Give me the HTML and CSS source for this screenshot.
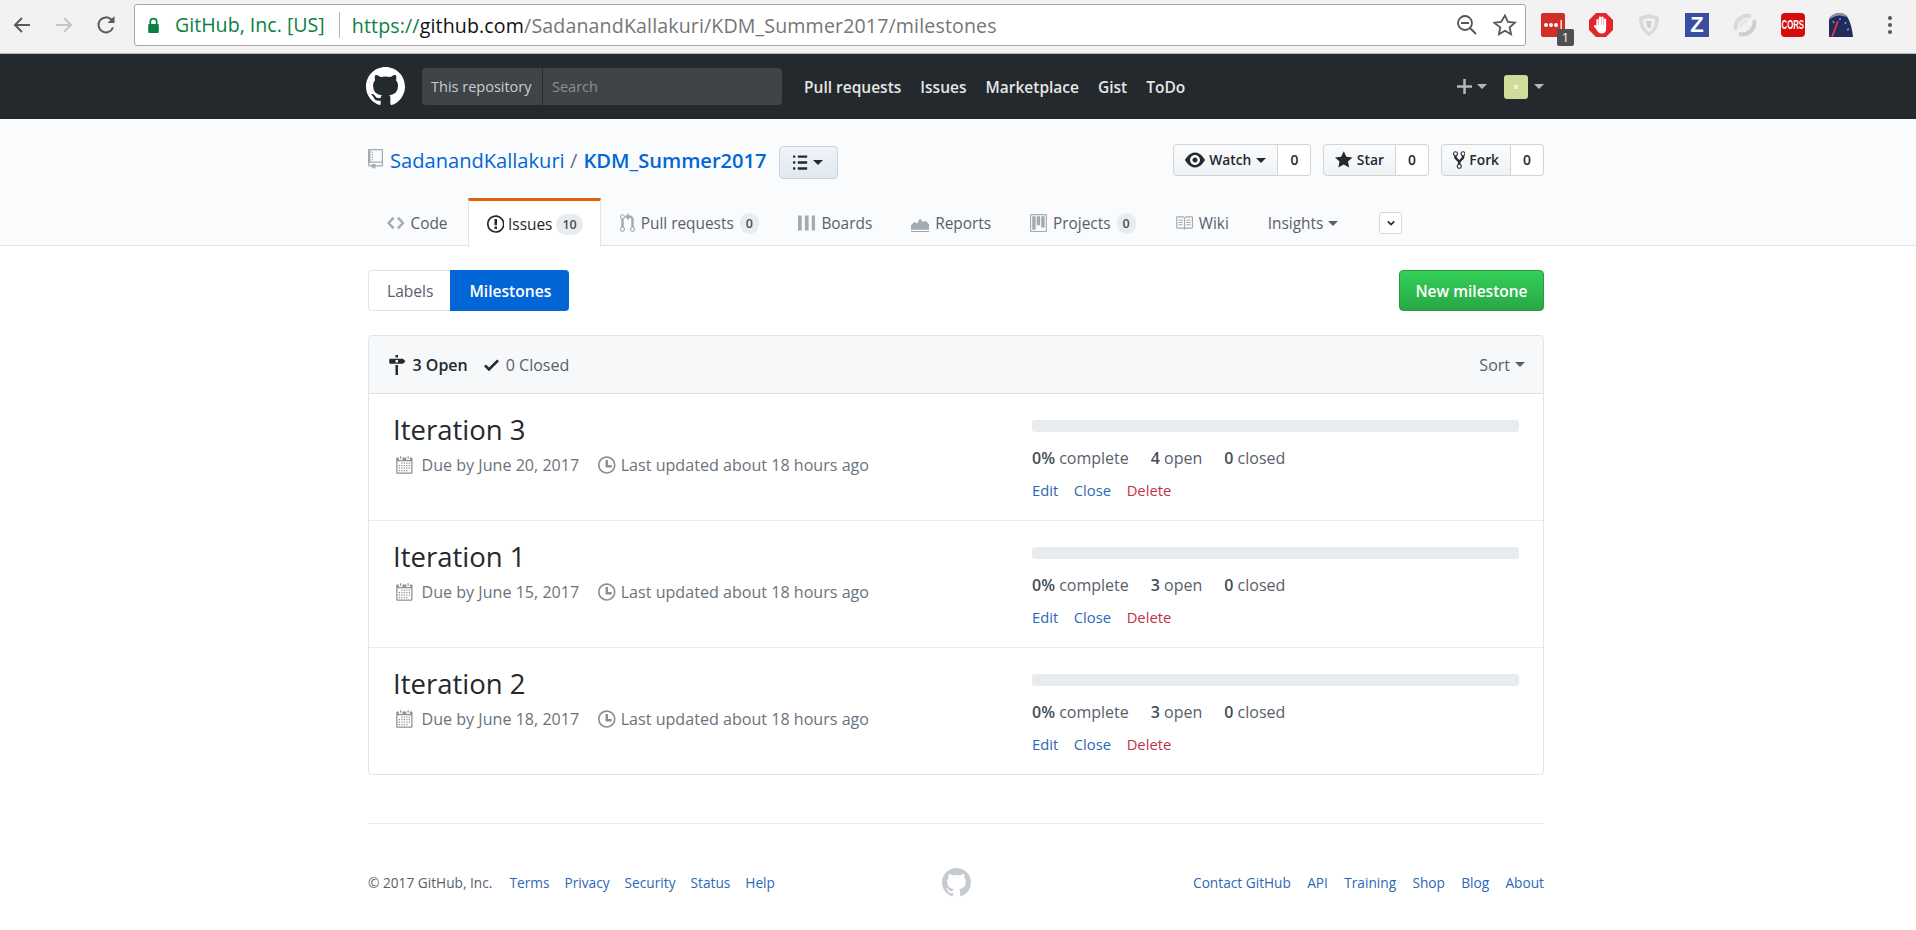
FILE: index.html
```html
<!DOCTYPE html>
<html lang="en">
<head>
  <meta charset="UTF-8">
  <title>Milestones - SadanandKallakuri/KDM_Summer2017</title>
  <link rel="stylesheet" href="styles.css">
</head>
<body>
  <!-- shared icon shapes -->
  <svg class="defs" width="0" height="0">
    <defs>
      <path id="i-mark" d="M8 0C3.58 0 0 3.58 0 8c0 3.54 2.29 6.53 5.47 7.59.4.07.55-.17.55-.38 0-.19-.01-.82-.01-1.49-2.01.37-2.53-.49-2.69-.94-.09-.23-.48-.94-.82-1.13-.28-.15-.68-.52-.01-.53.63-.01 1.08.58 1.23.82.72 1.21 1.87.87 2.33.66.07-.52.28-.87.51-1.07-1.78-.2-3.64-.89-3.64-3.95 0-.87.31-1.59.82-2.15-.08-.2-.36-1.02.08-2.12 0 0 .67-.21 2.2.82.64-.18 1.32-.27 2-.27.68 0 1.36.09 2 .27 1.53-1.04 2.2-.82 2.2-.82.44 1.1.16 1.92.08 2.12.51.56.82 1.27.82 2.15 0 3.07-1.87 3.75-3.65 3.95.29.25.54.73.54 1.48 0 1.07-.01 1.93-.01 2.2 0 .21.15.46.55.38A8.013 8.013 0 0 0 16 8c0-4.42-3.58-8-8-8z"/>
      <path id="i-repo" d="M4 9H3V8h1v1zm0-3H3v1h1V6zm0-2H3v1h1V4zm0-2H3v1h1V2zm8-1v12c0 .55-.45 1-1 1H6v2l-1.5-1.5L3 16v-2H1c-.55 0-1-.45-1-1V1c0-.55.45-1 1-1h10c.55 0 1 .45 1 1zm-1 10H1v2h2v-1h3v1h5v-2zm0-10H2v9h9V1z"/>
      <path id="i-code" d="M9.5 3L8 4.5 11.5 8 8 11.5 9.5 13 14 8 9.5 3zm-5 0L0 8l4.5 5L6 11.5 2.5 8 6 4.5 4.5 3z"/>
      <path id="i-issue" d="M7 2.3c3.14 0 5.7 2.56 5.7 5.7s-2.56 5.7-5.7 5.7A5.71 5.71 0 0 1 1.3 8c0-3.14 2.56-5.7 5.7-5.7zM7 1C3.14 1 0 4.14 0 8s3.14 7 7 7 7-3.14 7-7-3.14-7-7-7zm1 3H6v5h2V4zm0 6H6v2h2v-2z"/>
      <path id="i-pull" d="M11 11.28V5c-.03-.78-.34-1.47-.94-2.06C9.46 2.35 8.78 2.03 8 2H7V0L4 3l3 3V4h1c.27.02.48.11.69.31.21.2.3.42.31.69v6.28A1.993 1.993 0 0 0 10 15a1.993 1.993 0 0 0 1-3.72zm-1 2.92c-.66 0-1.2-.55-1.2-1.2 0-.65.55-1.2 1.2-1.2.65 0 1.2.55 1.2 1.2 0 .65-.55 1.2-1.2 1.2zM4 3c0-1.11-.89-2-2-2a1.993 1.993 0 0 0-1 3.72v6.56A1.993 1.993 0 0 0 2 15a1.993 1.993 0 0 0 1-3.72V4.72c.59-.34 1-.98 1-1.72zm-.8 10c0 .66-.55 1.2-1.2 1.2-.65 0-1.2-.55-1.2-1.2 0-.65.55-1.2 1.2-1.2.65 0 1.2.55 1.2 1.2zM2 4.2C1.34 4.2.8 3.65.8 3c0-.65.55-1.2 1.2-1.2.65 0 1.2.55 1.2 1.2 0 .65-.55 1.2-1.2 1.2z"/>
      <path id="i-boards" d="M0 2h3v12H0zM5.500 2h3v12h-3zM11 2h3v12h-3z"/>
      <path id="i-reports" d="M0 14V10l3-3 2.500 1.500L8 4l2.500 3 2.500-1 3 3v5zM0 15h16v1H0z"/>
      <path id="i-project" d="M10 12h3V2h-3v10zm-4-2h3V2H6v8zm-4 4h3V2H2v12zm-1 1h13V1H1v14zM14 0H1a1 1 0 0 0-1 1v14a1 1 0 0 0 1 1h13a1 1 0 0 0 1-1V1a1 1 0 0 0-1-1z"/>
      <path id="i-book" d="M3 5h4v1H3V5zm0 3h4V7H3v1zm0 2h4V9H3v1zm11-5h-4v1h4V5zm0 2h-4v1h4V7zm0 2h-4v1h4V9zm2-6v9c0 .55-.45 1-1 1H9.500l-1 1-1-1H2c-.55 0-1-.45-1-1V3c0-.55.45-1 1-1h5.500l1 1 1-1H15c.55 0 1 .45 1 1zm-8 .5L7.500 3H2v9h6V3.500zm7-.5H9.500l-.5.5V12h6V3z"/>
      <path id="i-eye" d="M8.060 2C3 2 0 8 0 8s3 6 8.060 6C13 14 16 8 16 8s-3-6-7.940-6zM8 12c-2.200 0-4-1.780-4-4 0-2.200 1.800-4 4-4 2.220 0 4 1.800 4 4 0 2.220-1.780 4-4 4zm2-4c0 1.110-.89 2-2 2-1.110 0-2-.89-2-2 0-1.110.89-2 2-2 1.110 0 2 .89 2 2z"/>
      <path id="i-star" d="M14 6l-4.900-.64L7 1 4.900 5.360 0 6l3.600 3.260L2.670 14 7 11.670 11.330 14l-.93-4.740L14 6z"/>
      <path id="i-fork" d="M8 1a1.993 1.993 0 0 0-1 3.720V6L5 8 3 6V4.720A1.993 1.993 0 0 0 2 1a1.993 1.993 0 0 0-1 3.720V6.500l3 3v1.780A1.993 1.993 0 0 0 5 15a1.993 1.993 0 0 0 1-3.720V9.500l3-3V4.720A1.993 1.993 0 0 0 8 1zM2 4.200C1.340 4.200.8 3.650.8 3c0-.65.55-1.200 1.200-1.200.65 0 1.200.55 1.200 1.200 0 .65-.55 1.200-1.200 1.200zm3 10c-.66 0-1.200-.55-1.200-1.200 0-.65.55-1.200 1.200-1.200.65 0 1.200.55 1.200 1.200 0 .65-.55 1.200-1.200 1.200zm3-10c-.66 0-1.200-.55-1.200-1.200 0-.65.55-1.200 1.200-1.200.65 0 1.200.55 1.200 1.200 0 .65-.55 1.200-1.200 1.200z"/>
      <path id="i-milestone" d="M8 2H6V0h2v2zm4 5H2c-.55 0-1-.45-1-1V4c0-.55.45-1 1-1h10l2 2-2 2zM8 4H6v2h2V4zM6 16h2V8H6v8z"/>
      <path id="i-check" d="M12 5l-8 8-4-4 1.500-1.500L4 10l6.500-6.500L12 5z"/>
      <path id="i-calendar" d="M13 2h-1v1.500c0 .28-.22.5-.5.5h-2c-.28 0-.5-.22-.5-.5V2H6v1.500c0 .28-.22.5-.5.5h-2c-.28 0-.5-.22-.5-.5V2H2c-.55 0-1 .45-1 1v11c0 .55.45 1 1 1h11c.55 0 1-.45 1-1V3c0-.55-.45-1-1-1zm0 12H2V5h11v9zM5 3H4V1h1v2zm6 0h-1V1h1v2zM6 7H5V6h1v1zm2 0H7V6h1v1zm2 0H9V6h1v1zm2 0h-1V6h1v1zM4 9H3V8h1v1zm2 0H5V8h1v1zm2 0H7V8h1v1zm2 0H9V8h1v1zm2 0h-1V8h1v1zm-8 2H3v-1h1v1zm2 0H5v-1h1v1zm2 0H7v-1h1v1zm2 0H9v-1h1v1zm2 0h-1v-1h1v1zm-8 2H3v-1h1v1zm2 0H5v-1h1v1zm2 0H7v-1h1v1zm2 0H9v-1h1v1z"/>
      <path id="i-clock" d="M8 8h3v2H7c-.55 0-1-.45-1-1V4h2v4zM7 2.300c3.140 0 5.700 2.560 5.700 5.700s-2.560 5.700-5.700 5.700A5.710 5.710 0 0 1 1.300 8c0-3.140 2.560-5.700 5.700-5.700zM7 1C3.140 1 0 4.140 0 8s3.140 7 7 7 7-3.140 7-7-3.140-7-7-7z"/>
      <path id="i-list" d="M2 13c0 .59 0 1-.59 1H.59C0 14 0 13.590 0 13c0-.59 0-1 .59-1h.81c.59 0 .59.41.59 1H2zm2.590-9h6.810c.59 0 .59-.41.59-1 0-.59 0-1-.59-1H4.590C4 2 4 2.410 4 3c0 .59 0 1 .59 1zM1.410 7H.59C0 7 0 7.410 0 8c0 .59 0 1 .59 1h.81c.59 0 .59-.41.59-1 0-.59 0-1-.59-1h.01zm0-5H.59C0 2 0 2.410 0 3c0 .59 0 1 .59 1h.81c.59 0 .59-.41.59-1 0-.59 0-1-.59-1h.01zm10 5H4.590C4 7 4 7.410 4 8c0 .59 0 1 .59 1h6.810c.59 0 .59-.41.59-1 0-.59 0-1-.59-1h.01zm0 5H4.590C4 12 4 12.410 4 13c0 .59 0 1 .59 1h6.810c.59 0 .59-.41.59-1 0-.59 0-1-.59-1h.01z"/>
    </defs>
  </svg>

  <div class="toolbar">
    <div class="nav-btns">
      <svg class="tb-icon" viewBox="0 0 24 24"><path d="M20 12H5M12 5l-7 7 7 7" fill="none" stroke="#5a5a5a" stroke-width="2"/></svg>
      <svg class="tb-icon" viewBox="0 0 24 24"><path d="M4 12h15M12 5l7 7-7 7" fill="none" stroke="#c4c4c4" stroke-width="2"/></svg>
      <svg class="tb-icon" viewBox="0 0 24 24"><path d="M19 14.500A7.500 7.500 0 1 1 17.500 6.800" fill="none" stroke="#5a5a5a" stroke-width="2"/><path d="M20.500 3v7h-7z" fill="#5a5a5a"/></svg>
    </div>
    <div class="omnibox">
      <svg class="lock" viewBox="0 0 12 16"><path d="M3 7V4.500a3 3 0 0 1 6 0V7" fill="none" stroke="#0b8043" stroke-width="1.600"/><rect x="1" y="6.500" width="10" height="8.500" rx="1" fill="#0b8043"/></svg>
      <span class="ev-name">GitHub, Inc. [US]</span>
      <span class="url"><span class="url-scheme">https://</span><span class="url-host">github.com</span>/SadanandKallakuri/KDM_Summer2017/milestones</span>
      <svg class="zoom-icon" viewBox="0 0 22 22"><circle cx="9" cy="9" r="7" fill="none" stroke="#555" stroke-width="1.800"/><path d="M5 9h8M14 14l6 6" fill="none" stroke="#555" stroke-width="1.800"/></svg>
      <svg class="star-icon" viewBox="0 0 24 24"><path d="M12 2.500l2.900 6.400 7 .8-5.200 4.700 1.400 6.900-6.100-3.500-6.100 3.500 1.400-6.900L1.100 9.700l7-.8z" fill="none" stroke="#555" stroke-width="1.800"/></svg>
    </div>
    <div class="extensions">
      <div class="ext ext-lastpass">
        <svg viewBox="0 0 24 24"><circle cx="5" cy="12" r="2" fill="#fff"/><circle cx="10" cy="12" r="2" fill="#fff"/><circle cx="15" cy="12" r="2" fill="#fff"/><rect x="19.500" y="7" width="1.300" height="10" fill="#fff"/></svg>
        <span class="ext-badge">1</span>
      </div>
      <svg class="ext" viewBox="0 0 24 24">
        <path d="M7 0h10l7 7v10l-7 7H7l-7-7V7z" fill="#e3262e"/>
        <path d="M8.500 14V7M11 14V4.500M13.500 14V4.500M16 14V6.500" stroke="#fff" stroke-width="2.200" stroke-linecap="round"/>
        <path d="M7.500 12h9.600v4c0 3-2 4.500-4.300 4.500-2.500 0-3.500-1-4.500-2.800L5 13.500c-.6-1.200.9-2 1.800-1z" fill="#fff"/>
      </svg>
      <svg class="ext" viewBox="0 0 24 24"><path d="M12 1l10 3c0 9-3 15-10 19C5 19 2 13 2 4z" fill="#d9d9d9"/><path d="M12 5l6 1.500c0 5.500-2 10-6 12.500-4-2.500-6-7-6-12.500z" fill="#f2f2f2"/><path d="M9 8h6l-1.500 7h-3z" fill="#cfcfcf"/></svg>
      <div class="ext ext-z">Z</div>
      <svg class="ext" viewBox="0 0 24 24"><path d="M3 17C1 9 8 1 18 3" fill="none" stroke="#dadada" stroke-width="4"/><path d="M21 7c2 8-5 16-15 14" fill="none" stroke="#cfcfcf" stroke-width="4"/><path d="M8 15c-1-4 3-8 7-7" fill="none" stroke="#e6e6e6" stroke-width="3"/></svg>
      <div class="ext ext-cors"><span>CORS</span></div>
      <svg class="ext" viewBox="0 0 24 24"><path d="M0 24V5C4 1 8 0 11 0c6 0 11 6 13 24z" fill="#232a5c"/><path d="M0 5C4 1 8 0 11 0c3 0 6 1.500 8 4L11 2.500C7 2.500 3 4 0 7z" fill="#8d93a8"/><path d="M3 24L9 8" stroke="#e0334a" stroke-width="2"/><path d="M4 8l1 2M11 5v2M17 9l-1 2M20 16l-2 1" stroke="#6fa8dc" stroke-width="1.500"/></svg>
    </div>
    <div class="kebab"><i></i><i></i><i></i></div>
  </div>

  <header class="site-header">
    <div class="wrap header-row">
      <svg class="header-logo" viewBox="0 0 16 16"><use href="#i-mark"/></svg>
      <div class="search">
        <span class="search-scope">This repository</span>
        <span class="search-input">Search</span>
      </div>
      <nav class="header-nav">
        <a>Pull requests</a>
        <a>Issues</a>
        <a>Marketplace</a>
        <a>Gist</a>
        <a>ToDo</a>
      </nav>
      <div class="header-right">
        <svg class="header-plus" viewBox="0 0 12 12"><path d="M12 7H7v5H5V7H0V5h5V0h2v5h5z"/></svg>
        <span class="caret caret-light"></span>
        <span class="avatar"><i></i></span>
        <span class="caret caret-light"></span>
      </div>
    </div>
  </header>

  <div class="pagehead">
    <div class="wrap">
      <div class="repo-row">
        <svg class="oct repo-icon" viewBox="0 0 12 16"><use href="#i-repo"/></svg>
        <h1 class="repo-title"><a>SadanandKallakuri</a> <span class="slash">/</span> <a class="repo-name">KDM_Summer2017</a></h1>
        <button class="list-btn"><svg class="oct" viewBox="0 0 12 16"><use href="#i-list"/></svg><span class="caret"></span></button>
        <ul class="actions">
          <li><span class="act-btn"><svg class="oct" viewBox="0 0 16 16"><use href="#i-eye"/></svg>Watch<span class="caret"></span></span><span class="act-count">0</span></li>
          <li><span class="act-btn"><svg class="oct" viewBox="0 0 14 16"><use href="#i-star"/></svg>Star</span><span class="act-count">0</span></li>
          <li><span class="act-btn"><svg class="oct" viewBox="0 0 10 16"><use href="#i-fork"/></svg>Fork</span><span class="act-count">0</span></li>
        </ul>
      </div>
      <nav class="tabs">
        <a class="tab"><svg class="oct" viewBox="0 0 14 16"><use href="#i-code"/></svg>Code</a>
        <a class="tab selected"><svg class="oct" viewBox="0 0 14 16"><use href="#i-issue"/></svg>Issues<span class="counter">10</span></a>
        <a class="tab"><svg class="oct" viewBox="0 0 12 16"><use href="#i-pull"/></svg>Pull requests<span class="counter">0</span></a>
        <a class="tab"><svg class="oct" viewBox="0 0 14 16"><use href="#i-boards"/></svg>Boards</a>
        <a class="tab"><svg class="oct small" viewBox="0 0 16 16"><use href="#i-reports"/></svg>Reports</a>
        <a class="tab"><svg class="oct small" viewBox="0 0 15 16"><use href="#i-project"/></svg>Projects<span class="counter">0</span></a>
        <a class="tab"><svg class="oct small" viewBox="0 0 16 16"><use href="#i-book"/></svg>Wiki</a>
        <a class="tab">Insights<span class="caret"></span></a>
        <span class="more-btn"><svg viewBox="0 0 10 6"><path d="M1 1l4 4 4-4" fill="none" stroke="#24292e" stroke-width="2"/></svg></span>
      </nav>
    </div>
  </div>

  <main class="wrap">
    <div class="subnav">
      <div class="subnav-links">
        <a class="subnav-item">Labels</a>
        <a class="subnav-item active">Milestones</a>
      </div>
      <a class="btn-primary">New milestone</a>
    </div>

    <div class="box">
      <div class="box-header">
        <span class="state open"><svg class="oct" viewBox="0 0 14 16"><use href="#i-milestone"/></svg>3 Open</span>
        <span class="state"><svg class="oct" viewBox="0 0 12 16"><use href="#i-check"/></svg>0 Closed</span>
        <span class="sort">Sort<span class="caret"></span></span>
      </div>

      <div class="milestone">
        <div class="ms-left">
          <h2 class="ms-title">Iteration 3</h2>
          <div class="ms-meta">
            <span class="ms-due"><svg class="oct" viewBox="0 0 14 16"><use href="#i-calendar"/></svg>Due by June 20, 2017</span>
            <span class="ms-updated"><svg class="oct" viewBox="0 0 14 16"><use href="#i-clock"/></svg>Last updated about 18 hours ago</span>
          </div>
        </div>
        <div class="ms-right">
          <div class="progress"></div>
          <div class="ms-stats"><span><b>0%</b> complete</span><span><b>4</b> open</span><span><b>0</b> closed</span></div>
          <div class="ms-actions"><a>Edit</a><a>Close</a><a class="danger">Delete</a></div>
        </div>
      </div>

      <div class="milestone">
        <div class="ms-left">
          <h2 class="ms-title">Iteration 1</h2>
          <div class="ms-meta">
            <span class="ms-due"><svg class="oct" viewBox="0 0 14 16"><use href="#i-calendar"/></svg>Due by June 15, 2017</span>
            <span class="ms-updated"><svg class="oct" viewBox="0 0 14 16"><use href="#i-clock"/></svg>Last updated about 18 hours ago</span>
          </div>
        </div>
        <div class="ms-right">
          <div class="progress"></div>
          <div class="ms-stats"><span><b>0%</b> complete</span><span><b>3</b> open</span><span><b>0</b> closed</span></div>
          <div class="ms-actions"><a>Edit</a><a>Close</a><a class="danger">Delete</a></div>
        </div>
      </div>

      <div class="milestone">
        <div class="ms-left">
          <h2 class="ms-title">Iteration 2</h2>
          <div class="ms-meta">
            <span class="ms-due"><svg class="oct" viewBox="0 0 14 16"><use href="#i-calendar"/></svg>Due by June 18, 2017</span>
            <span class="ms-updated"><svg class="oct" viewBox="0 0 14 16"><use href="#i-clock"/></svg>Last updated about 18 hours ago</span>
          </div>
        </div>
        <div class="ms-right">
          <div class="progress"></div>
          <div class="ms-stats"><span><b>0%</b> complete</span><span><b>3</b> open</span><span><b>0</b> closed</span></div>
          <div class="ms-actions"><a>Edit</a><a>Close</a><a class="danger">Delete</a></div>
        </div>
      </div>
    </div>
  </main>

  <footer class="wrap footer">
    <div class="footer-left">
      <span class="copy">© 2017 GitHub, Inc.</span>
      <a>Terms</a><a>Privacy</a><a>Security</a><a>Status</a><a>Help</a>
    </div>
    <svg class="footer-logo" viewBox="0 0 16 16"><use href="#i-mark"/></svg>
    <div class="footer-right">
      <a>Contact GitHub</a><a>API</a><a>Training</a><a>Shop</a><a>Blog</a><a>About</a>
    </div>
  </footer>
</body>
</html>
```

FILE: styles.css
```css
html, body {
  margin: 0;
  height: 930px;
  overflow: hidden;
}

body {
  font-family: "Open Sans", "Noto Sans", sans-serif;
  font-size: 16px;
  color: #24292e;
  background: #fff;
}

.defs {
  display: block;
  height: 0;
}

a {
  color: #0366d6;
  text-decoration: none;
}

.wrap {
  width: 1176px;
  margin-left: 368px;
}

.oct {
  height: 20px;
  width: auto;
  fill: currentColor;
  fill-rule: evenodd;
  flex: none;
}

.oct.small {
  height: 18px;
}

.caret {
  display: inline-block;
  width: 0;
  height: 0;
  border-style: solid;
  border-width: 5px 5px 0;
  border-color: currentColor transparent transparent;
}

/* browser chrome */
.toolbar {
  height: 54px;
  box-sizing: border-box;
  padding-bottom: 3px;
  display: flex;
  align-items: center;
  background: #f2f2f2;
  border-bottom: 1px solid #b8b8b8;
}

.nav-btns {
  display: flex;
  gap: 18px;
  padding-left: 10px;
  width: 124px;
  box-sizing: border-box;
}

.tb-icon {
  width: 24px;
  height: 24px;
}

.omnibox {
  width: 1392px;
  height: 42px;
  box-sizing: border-box;
  display: flex;
  align-items: center;
  margin-left: 10px;
  padding: 0 8px 0 12px;
  background: #fff;
  border: 1px solid #a9a9a9;
  border-radius: 3px;
  font-size: 19.600px;
}

.lock {
  width: 13px;
  height: 17px;
}

.ev-name {
  color: #0b8043;
  margin-left: 15px;
  padding-right: 14px;
  border-right: 1px solid #b5b5b5;
  line-height: 26px;
}

.url {
  color: #767676;
  margin-left: 12px;
  flex: 1;
  letter-spacing: 0.135px;
}

.url-scheme {
  color: #0b8043;
}

.url-host {
  color: #111;
}

.zoom-icon {
  width: 22px;
  height: 22px;
}

.star-icon {
  width: 24px;
  height: 24px;
  margin-left: 15px;
}

.extensions {
  display: flex;
  gap: 24px;
  margin-left: 15px;
}

.ext {
  position: relative;
  width: 24px;
  height: 24px;
  flex: none;
}

.ext-lastpass {
  background: #d32d27;
  border-radius: 2px;
}

.ext-lastpass svg {
  display: block;
}

.ext-badge {
  position: absolute;
  left: 16px;
  top: 16px;
  width: 17px;
  height: 17px;
  background: #505050;
  color: #fff;
  border-radius: 2px;
  font-size: 12px;
  line-height: 17px;
  text-align: center;
}

.ext-z {
  background: #3b4da0;
  color: #fff;
  font: 700 22px/24px "Liberation Sans", sans-serif;
  text-align: center;
}

.ext-cors {
  display: flex;
  justify-content: center;
  background: #d40c0c;
  border-radius: 4px;
  color: #fff;
  font: 700 13px/24px "Liberation Sans", sans-serif;
}

.ext-cors span {
  display: block;
  transform: scaleX(0.6);
}

.kebab {
  display: flex;
  flex-direction: column;
  gap: 3px;
  margin-left: 35px;
}

.kebab i {
  width: 4px;
  height: 4px;
  border-radius: 50%;
  background: #555;
}

/* site header */
.site-header {
  height: 65px;
  background: #24292e;
}

.header-row {
  height: 65px;
  display: flex;
  align-items: center;
}

.header-logo {
  width: 39px;
  height: 39px;
  margin-left: -2px;
  fill: #fff;
  fill-rule: evenodd;
}

.search {
  width: 360px;
  height: 37px;
  margin-left: 17px;
  display: flex;
  align-items: center;
  background: #3f4448;
  border-radius: 4px;
  font-size: 14.500px;
}

.search-scope {
  color: #ccc;
  width: 121px;
  padding-left: 9px;
  box-sizing: border-box;
  line-height: 37px;
  border-right: 1px solid #24292e;
}

.search-input {
  color: #8b8f93;
  margin-left: 9px;
}

.header-nav {
  display: flex;
  gap: 19px;
  margin-left: 22px;
  font-size: 15.500px;
  font-weight: 600;
}

.header-nav a {
  color: #e6e6e6;
}

.header-right {
  margin-left: auto;
  display: flex;
  align-items: center;
  color: #b5b7b9;
}

.header-plus {
  width: 15px;
  height: 15px;
  fill: #b5b7b9;
  margin-right: 5px;
}

.avatar {
  width: 24px;
  height: 24px;
  margin: 0 6px 0 17px;
  display: flex;
  align-items: center;
  justify-content: center;
  background: #cfdc9a;
  border-radius: 3px;
}

.avatar i {
  width: 4px;
  height: 4px;
  background: #f1f4dd;
}

/* repo head */
.pagehead {
  height: 127px;
  box-sizing: border-box;
  background: #fafbfc;
  border-bottom: 1px solid #e1e4e8;
}

.repo-row {
  height: 79px;
  display: flex;
  align-items: center;
  padding-top: 4px;
  box-sizing: border-box;
}

.repo-icon {
  color: #a3aab1;
  margin-top: -4px;
}

.repo-title {
  margin: 0 0 0 7px;
  font-size: 20.100px;
  font-weight: 400;
  color: #6a737d;
}

.repo-name {
  font-weight: 600;
  margin-left: 1px;
}

.list-btn {
  display: flex;
  align-items: center;
  justify-content: center;
  gap: 5px;
  width: 59px;
  height: 33px;
  margin: 3px 0 0 12px;
  padding: 0;
  color: #24292e;
  background: linear-gradient(#f0f4f9, #e1e8f0);
  border: 1px solid #cdd3da;
  border-radius: 4px;
}

.list-btn .oct {
  height: 19px;
}

.actions {
  margin: -1px 0 0 auto;
  padding: 0;
  list-style: none;
  display: flex;
  gap: 12px;
}

.actions li {
  display: flex;
  height: 32px;
  font-size: 13.800px;
  font-weight: 600;
  line-height: 30px;
}

.act-btn {
  display: flex;
  align-items: center;
  gap: 4px;
  padding: 0 11px;
  background: linear-gradient(#fafbfc, #eff3f6);
  border: 1px solid #d1d3d5;
  border-radius: 4px 0 0 4px;
}

.act-btn .caret {
  margin-left: 1px;
}

.act-count {
  width: 33px;
  text-align: center;
  background: #fff;
  border: 1px solid #d1d3d5;
  border-left: 0;
  border-radius: 0 4px 4px 0;
  box-sizing: border-box;
}

.tabs {
  display: flex;
  align-items: flex-start;
  height: 48px;
}

.tab {
  display: flex;
  align-items: center;
  gap: 6px;
  height: 48px;
  padding: 2px 20px 0 19px;
  box-sizing: border-box;
  color: #586069;
  font-size: 15.400px;
}

.tab .oct {
  color: #a3aab1;
}

.tab.selected {
  gap: 4px;
  color: #24292e;
  background: #fff;
  border-top: 3px solid #e36209;
  border-left: 1px solid #e1e4e8;
  border-right: 1px solid #e1e4e8;
  padding: 0 17px 0 18px;
  height: 49px;
  margin-bottom: -1px;
  position: relative;
}

.tab.selected .oct {
  color: #24292e;
}

.counter {
  padding: 0 6px;
  background: #e9ecef;
  border-radius: 13px;
  font-size: 12.500px;
  font-weight: 600;
  line-height: 21px;
  color: #444d56;
}

.tab .caret {
  margin-left: -1px;
}

.more-btn {
  display: flex;
  align-items: center;
  justify-content: center;
  width: 23px;
  height: 22px;
  margin: 14px 0 0 21px;
  background: #fff;
  border: 1px solid #d6d9dc;
  border-radius: 3px;
  box-sizing: border-box;
}

.more-btn svg {
  width: 8px;
  height: 6px;
}

/* labels / milestones */
.subnav {
  display: flex;
  justify-content: space-between;
  padding-top: 24px;
}

.subnav-links {
  display: flex;
}

.subnav-item {
  height: 41px;
  box-sizing: border-box;
  padding: 0 17px 0 18px;
  line-height: 40px;
  font-size: 15.600px;
  color: #586069;
  border: 1px solid #e1e4e8;
  border-right: 0;
  border-radius: 4px 0 0 4px;
}

.subnav-item.active {
  padding: 0 18px;
  color: #fff;
  font-weight: 600;
  background: #0366d6;
  border-color: #0366d6;
  border-radius: 0 4px 4px 0;
}

.btn-primary {
  width: 145px;
  height: 41px;
  box-sizing: border-box;
  line-height: 40px;
  text-align: center;
  font-size: 15.500px;
  font-weight: 600;
  color: #fff;
  background: linear-gradient(#34d058, #28a745);
  border: 1px solid #2b9a48;
  border-radius: 4px;
}

.box {
  margin-top: 24px;
  border: 1px solid #e1e4e8;
  border-radius: 4px;
}

.box-header {
  height: 58px;
  box-sizing: border-box;
  display: flex;
  align-items: center;
  padding: 0 18px 0 19px;
  gap: 16px;
  background: #f6f8fa;
  border-bottom: 1px solid #dfe2e5;
  border-radius: 4px 4px 0 0;
  color: #586069;
}

.state {
  display: flex;
  align-items: center;
  gap: 7px;
}

.state.open {
  color: #24292e;
  font-weight: 600;
}

.state .oct {
  color: #24292e;
}

.sort {
  margin-left: auto;
  display: flex;
  align-items: center;
  gap: 5px;
}

.milestone {
  height: 127px;
  box-sizing: border-box;
  display: flex;
  border-bottom: 1px solid #eaecef;
}

.milestone:last-child {
  border-bottom: 0;
  height: 126px;
}

.ms-left {
  width: 663px;
  padding: 18px 0 0 24px;
  box-sizing: border-box;
}

.ms-title {
  margin: 0;
  font-size: 27.500px;
  font-weight: 400;
  line-height: 36px;
}

.ms-meta {
  display: flex;
  gap: 19px;
  margin-top: 5px;
  padding-left: 2px;
  color: #6a737d;
  font-size: 16.100px;
  line-height: 24px;
}

.ms-due, .ms-updated {
  display: flex;
  align-items: center;
  gap: 5px;
}

.ms-due {
  gap: 9px;
}

.ms-due .oct, .ms-updated .oct {
  color: #8a9097;
}

.ms-right {
  width: 487px;
  padding-top: 26px;
}

.progress {
  height: 12px;
  background: #e9ecef;
  border-radius: 3px;
}

.ms-stats {
  display: flex;
  gap: 22px;
  margin-top: 14px;
  font-size: 16px;
  line-height: 24px;
  color: #586069;
}

.ms-stats b {
  font-weight: 600;
  color: #444d56;
}

.ms-actions {
  display: flex;
  gap: 15.500px;
  margin-top: 10px;
  font-size: 14.800px;
  line-height: 20px;
}

.ms-actions a {
  color: #2b68b8;
}

.ms-actions a.danger {
  color: #c0304a;
}

/* footer */
.footer {
  margin-top: 48px;
  height: 107px;
  box-sizing: border-box;
  border-top: 1px solid #eaecef;
  display: grid;
  grid-template-columns: 1fr auto 1fr;
  align-items: center;
  padding-top: 11px;
  font-size: 13.700px;
  color: #586069;
}

.footer a {
  color: #2b68b8;
}

.footer-left, .footer-right {
  display: flex;
  gap: 15px;
}

.copy {
  margin-right: 2px;
}

.footer-right {
  gap: 16.300px;
  justify-content: flex-end;
}

.footer-logo {
  width: 29px;
  height: 29px;
  fill: #c6cbd1;
  fill-rule: evenodd;
}
```
